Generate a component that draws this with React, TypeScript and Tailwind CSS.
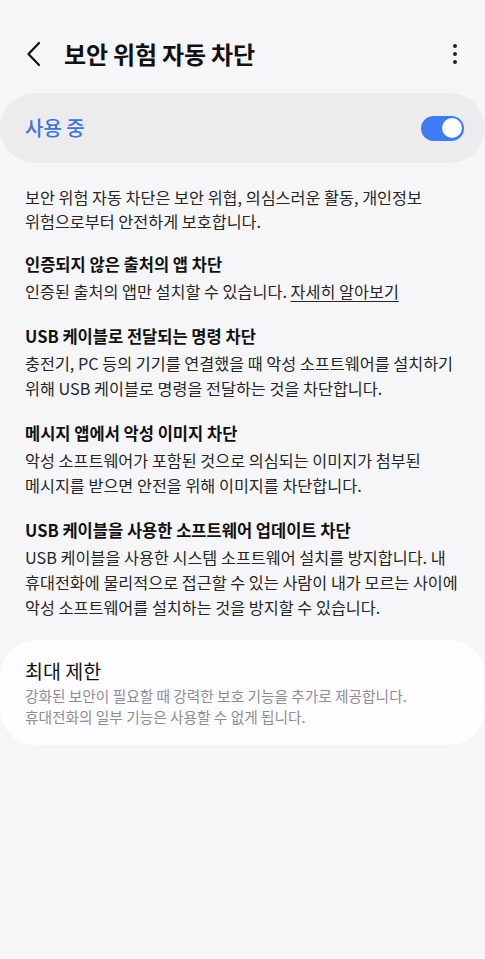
import React, { useState } from "react";

type Section = {
  title: string;
  lines: React.ReactNode[];
};

const sections: Section[] = [
  {
    title: "인증되지 않은 출처의 앱 차단",
    lines: [
      <>
        인증된 출처의 앱만 설치할 수 있습니다.{" "}
        <span className="underline underline-offset-[3px]">자세히 알아보기</span>
      </>,
    ],
  },
  {
    title: "USB 케이블로 전달되는 명령 차단",
    lines: [
      "충전기, PC 등의 기기를 연결했을 때 악성 소프트웨어를 설치하기",
      "위해 USB 케이블로 명령을 전달하는 것을 차단합니다.",
    ],
  },
  {
    title: "메시지 앱에서 악성 이미지 차단",
    lines: [
      "악성 소프트웨어가 포함된 것으로 의심되는 이미지가 첨부된",
      "메시지를 받으면 안전을 위해 이미지를 차단합니다.",
    ],
  },
  {
    title: "USB 케이블을 사용한 소프트웨어 업데이트 차단",
    lines: [
      "USB 케이블을 사용한 시스템 소프트웨어 설치를 방지합니다. 내",
      "휴대전화에 물리적으로 접근할 수 있는 사람이 내가 모르는 사이에",
      "악성 소프트웨어를 설치하는 것을 방지할 수 있습니다.",
    ],
  },
];

export default function App() {
  const [enabled, setEnabled] = useState(true);

  return (
    <main
      className="min-h-[959px] bg-[#f6f6f8] pt-[30px] text-[#222]"
      style={{ fontFamily: '"Noto Sans CJK KR", "Noto Sans", sans-serif' }}
    >
      {/* Header */}
      <header className="flex h-[48px] items-center pl-[22px] pr-[20px]">
        <button className="flex h-[30px] w-[24px] items-center justify-center">
          <svg width="16" height="26" viewBox="0 0 16 26" fill="none">
            <path
              d="M13 2 L2.5 13 L13 24"
              stroke="#111"
              strokeWidth="2.2"
              strokeLinecap="round"
              strokeLinejoin="round"
            />
          </svg>
        </button>
        <h1 className="ml-[18px] flex-1 text-[24px] font-bold tracking-[-0.2px] text-[#111]">
          보안 위험 자동 차단
        </h1>
        <button className="flex h-[30px] w-[20px] flex-col items-center justify-center gap-[4px]">
          <span className="h-[4px] w-[4px] rounded-full bg-[#222]" />
          <span className="h-[4px] w-[4px] rounded-full bg-[#222]" />
          <span className="h-[4px] w-[4px] rounded-full bg-[#222]" />
        </button>
      </header>

      {/* Master switch card */}
      <div className="mt-[15px] flex h-[70px] items-center justify-between rounded-[36px] bg-[#ececef] pl-[25px] pr-[21px]">
        <span className="text-[20px] font-medium text-[#3f74d6]">사용 중</span>
        <button
          onClick={() => setEnabled(!enabled)}
          className={
            "flex h-[25px] w-[43px] items-center rounded-full px-[2px] " +
            (enabled ? "justify-end bg-[#3d7cf6]" : "justify-start bg-[#b9b9bd]")
          }
        >
          <span className="h-[20px] w-[20px] rounded-full bg-[#fbfbfe]" />
        </button>
      </div>

      {/* Description */}
      <section className="px-[25px] pt-[22px]">
        <p className="text-[16.25px] leading-[24px] text-[#262626]">
          <span className="block whitespace-nowrap">
            보안 위험 자동 차단은 보안 위협, 의심스러운 활동, 개인정보
          </span>
          <span className="block whitespace-nowrap">위험으로부터 안전하게 보호합니다.</span>
        </p>

        {sections.map((s, idx) => (
          <div key={s.title} className={idx === 0 ? "mt-[19px]" : "mt-[20px]"}>
            <h2 className="whitespace-nowrap text-[16.5px] font-bold leading-[24px] text-[#111]">
              {s.title}
            </h2>
            <p className="mt-[3px] text-[16.25px] leading-[25px] text-[#262626]">
              {s.lines.map((line, i) => (
                <span key={i} className="block whitespace-nowrap">
                  {line}
                </span>
              ))}
            </p>
          </div>
        ))}
      </section>

      {/* Maximum restriction card */}
      <div className="mt-[20px] rounded-[36px] bg-[#fdfdff] px-[25px] pb-[18px] pt-[19px]">
        <div className="text-[19.5px] leading-[24px] text-[#111]">최대 제한</div>
        <p className="mt-[2px] text-[14.7px] leading-[21px] text-[#8e8e92]">
          <span className="block whitespace-nowrap">
            강화된 보안이 필요할 때 강력한 보호 기능을 추가로 제공합니다.
          </span>
          <span className="block whitespace-nowrap">휴대전화의 일부 기능은 사용할 수 없게 됩니다.</span>
        </p>
      </div>
    </main>
  );
}
